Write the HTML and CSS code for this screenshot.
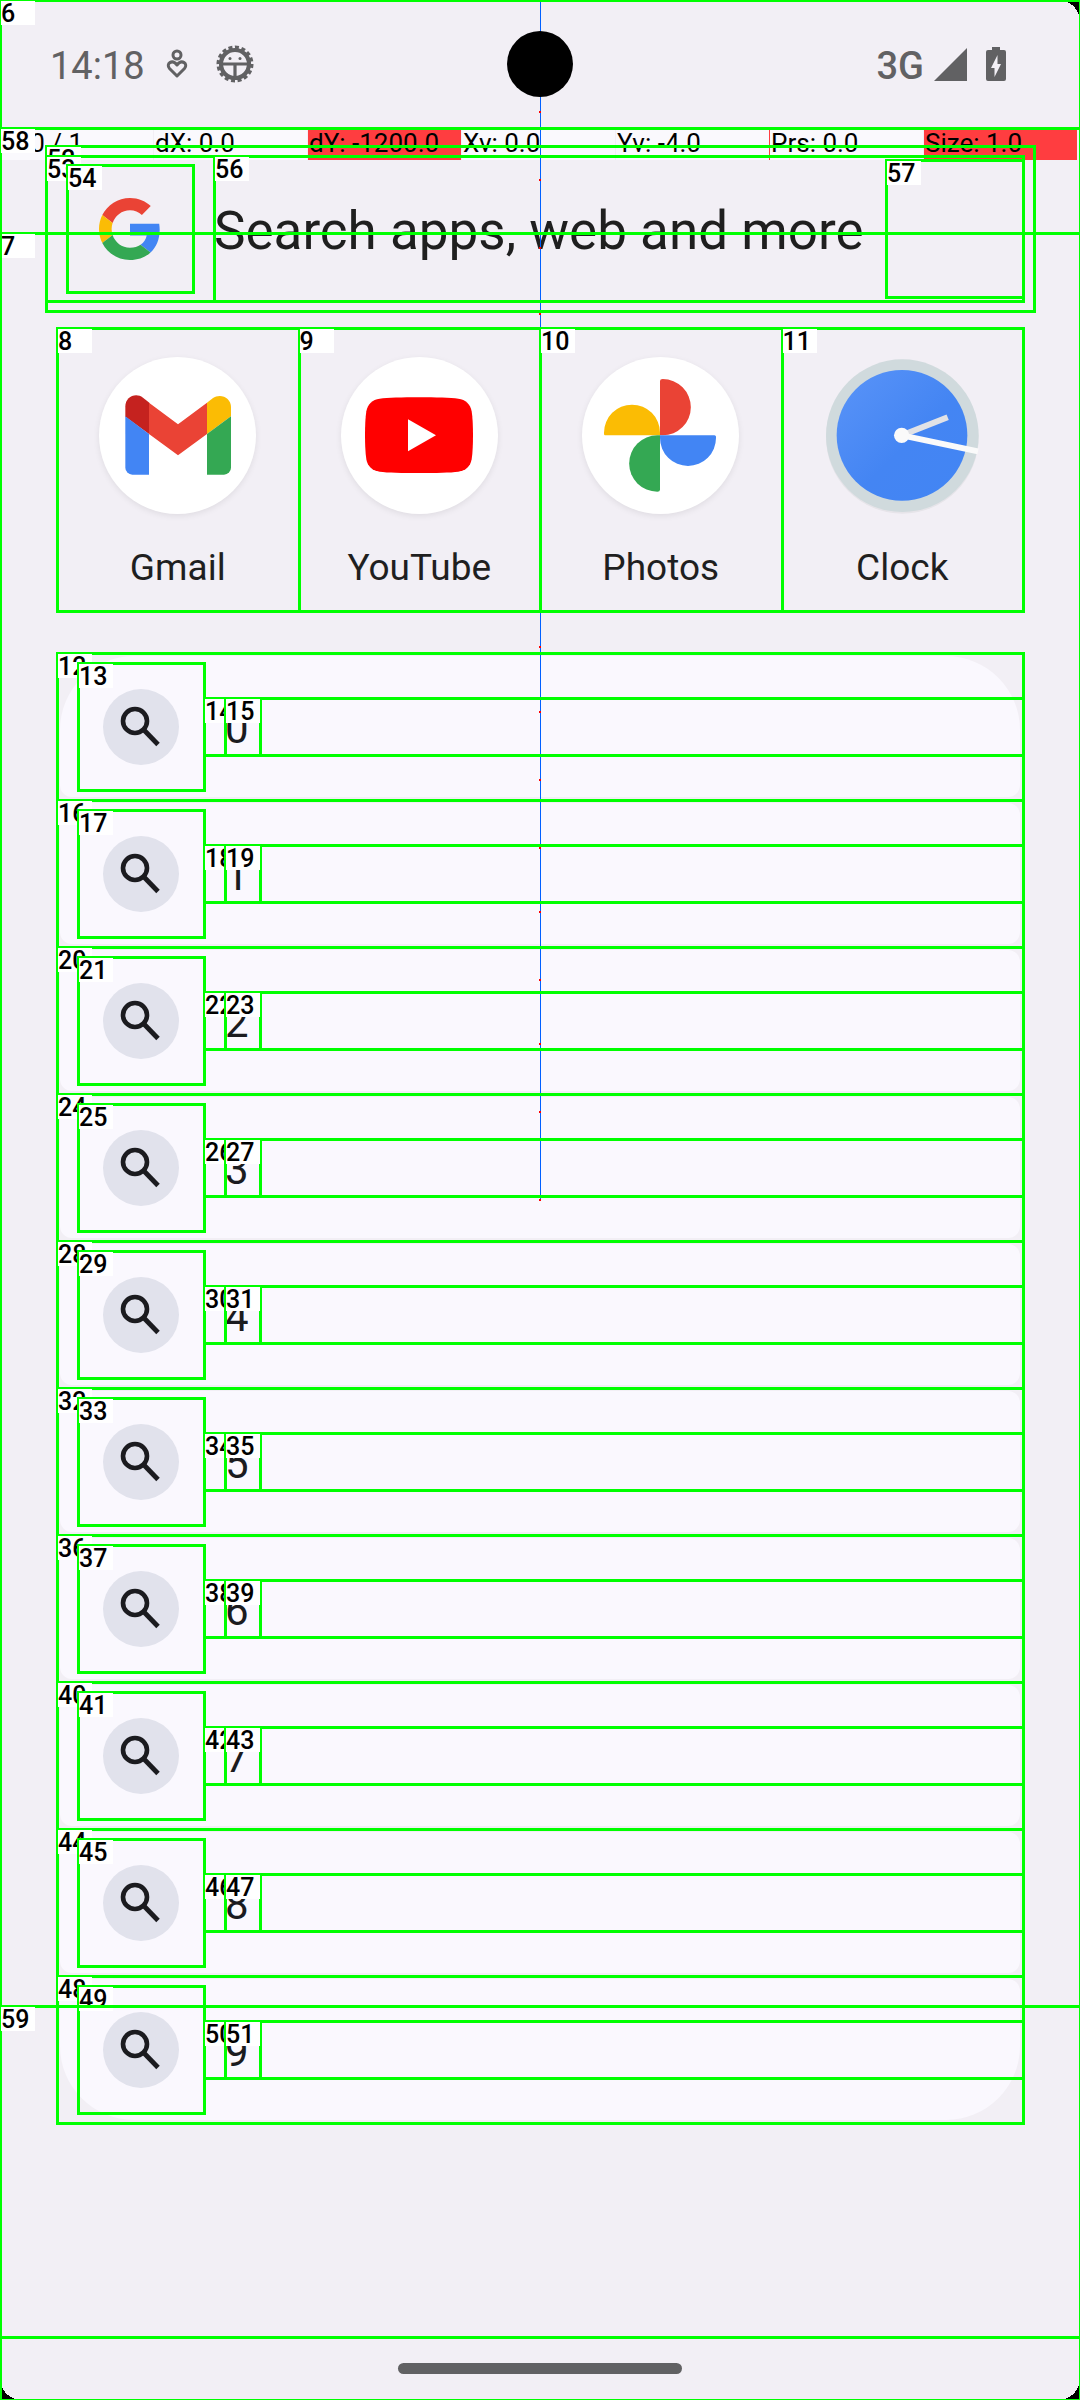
FILE: index.html
```html
<!DOCTYPE html>
<html lang="en">
<head>
<meta charset="utf-8">
<meta name="viewport" content="width=device-width, initial-scale=1">
<title>App search</title>
<link rel="stylesheet" href="styles.css">
</head>
<body>
<div class="screen">
  <span class="mark"><b>6</b></span>
  <span class="mark mark-content"><b>7</b></span>

  <header class="status">
    <span class="clock-text">14:18</span>
    <svg class="wellbeing" viewBox="0 0 22 30" fill="none" stroke="#616163" stroke-width="3"><circle cx="11" cy="6" r="4"/><path d="M11 27L3.500 19.500C-.5 15 6 9.500 11 16C16 9.500 22.500 15 18.500 19.500Z" stroke-linejoin="round"/></svg>
    <svg class="bug" viewBox="0 0 38 38" fill="none" stroke="#616163"><circle cx="19" cy="19" r="16.500" stroke-width="4" pathLength="32" stroke-dasharray="1.200 .8"/><circle cx="19" cy="19" r="14" stroke-width="4.200"/><path d="M5 19H33M19 19V33" stroke-width="3.200"/><circle cx="14" cy="13.500" r="1.500" fill="#616163" stroke="none"/><circle cx="24" cy="13.500" r="1.500" fill="#616163" stroke="none"/></svg>
    <span class="network">3G</span>
    <svg class="signal" viewBox="0 0 33 33"><path d="M33 0V33H0Z" fill="#616163"/></svg>
    <svg class="battery" viewBox="0 0 20 34"><path d="M6 0H14V3H18Q20 3 20 5V32Q20 34 18 34H2Q0 34 0 32V5Q0 3 2 3H6Z" fill="#616163"/><path d="M11.500 8V17H15L8.500 30V21H5Z" fill="#f2eff5"/></svg>
  </header>

  <div class="pointer-bar">
    <span>P: 0 / 1</span><span>dX: 0.0</span><span class="hot">dY: -1200.0</span><span>Xv: 0.0</span><span>Yv: -4.0</span><span class="edge">Prs: 0.0</span><span class="hot">Size: 1.0</span>
  </div>

  <main>
    <form class="search">
      <span class="mark"><b>52</b></span>
      <div class="search-row">
        <span class="mark"><b>53</b></span>
        <span class="logo"><svg viewBox="0 0 48 48"><path fill="#EA4335" d="M24 9.500c3.540 0 6.710 1.220 9.210 3.600l6.850-6.850C35.900 2.380 30.470 0 24 0 14.620 0 6.510 5.380 2.560 13.220l7.980 6.190C12.430 13.720 17.740 9.500 24 9.500z"/><path fill="#4285F4" d="M46.980 24.550c0-1.570-.15-3.090-.38-4.550H24v9.020h12.940c-.58 2.960-2.260 5.480-4.780 7.180l7.730 6c4.510-4.180 7.090-10.360 7.090-17.650z"/><path fill="#FBBC05" d="M10.530 28.590c-.48-1.450-.76-2.990-.76-4.590s.27-3.140.76-4.590l-7.980-6.190C.92 16.460 0 20.120 0 24c0 3.880.92 7.540 2.560 10.780l7.970-6.190z"/><path fill="#34A853" d="M24 48c6.480 0 11.930-2.130 15.890-5.810l-7.730-6c-2.150 1.450-4.920 2.300-8.160 2.300-6.260 0-11.570-4.220-13.470-9.910l-7.980 6.190C6.510 42.620 14.620 48 24 48z"/></svg><span class="mark"><b>54</b></span></span>
        <label class="field">
          <input type="text" placeholder="Search apps, web and more" aria-label="Search apps, web and more">
          <span class="mark"><b>56</b></span>
        </label>
        <button class="action" type="button" aria-label="Clear"><span class="mark"><b>57</b></span></button>
      </div>
    </form>

    <nav class="apps">
      <a class="app" href="#gmail"><svg class="white" viewBox="177 140 471 471"><path fill="#c5221f" d="M256 319V288c0-27 30-43 53-26l19 15v95z"/><path fill="#4285f4" d="M256 318l71 53v122h-50a21 21 0 0 1-21-21z"/><path fill="#ea4335" d="M327 277l87 65 87-65v94l-87 64-87-64z"/><path fill="#fbbc04" d="M501 277l17-13c23-17 55-2 55 26v28l-72 53z"/><path fill="#34a853" d="M501 371l72-53v154a21 21 0 0 1-21 21h-51z"/></svg><span>Gmail</span><span class="mark"><b>8</b></span></a>
      <a class="app" href="#youtube"><svg class="white" viewBox="900 140 471 471"><path fill="#f00" d="M1134 261c50 0 95 1 118 4 22 3 36 16 40 38 3 20 4 45 4 72s-1 52-4 72c-4 22-18 34-40 37-23 3-68 4-118 4s-95-1-118-4c-22-3-36-15-40-37-3-20-4-45-4-72s1-52 4-72c4-22 18-35 40-38 23-3 68-4 118-4z"/><path fill="#fff" d="M1101 327l84 48-84 48z"/></svg><span>YouTube</span><span class="mark"><b>9</b></span></a>
      <a class="app" href="#photos"><svg class="white" viewBox="156 140 471 471"><path fill="#ea4335" d="M390 375V212q0-6 8-6a84.500 84.500 0 0 1 0 169z"/><path fill="#fbbc04" d="M390 375H227q-6 0-5-8a84 84 0 0 1 168 0z"/><path fill="#4285f4" d="M390 375H553q6 0 5 8a84 84 0 0 1-168 0z"/><path fill="#34a853" d="M390 375V538q0 6-8 6a84.500 84.500 0 0 1 0-169z"/></svg><span>Photos</span><span class="mark"><b>10</b></span></a>
      <a class="app" href="#clock"><svg viewBox="879 140 471 471"><defs><linearGradient id="face" x1="0" y1="0" x2="1" y2="1"><stop offset="0" stop-color="#5a94f8"/><stop offset=".55" stop-color="#4485f3"/><stop offset="1" stop-color="#4285f4"/></linearGradient></defs><circle cx="1114" cy="381" r="229" fill="#e6e4e9"/><circle cx="1114" cy="376" r="229" fill="#d0dadd"/><circle cx="1113" cy="375" r="196" fill="url(#face)"/><path d="M1113 375L1250 321" stroke="#e1e2e6" stroke-width="18"/><path d="M1113 375L1341 423" stroke="#fafafa" stroke-width="18"/><circle cx="1112" cy="375" r="23" fill="#fafafa"/></svg><span>Clock</span><span class="mark"><b>11</b></span></a>
    </nav>

    <svg class="defs" width="0" height="0" aria-hidden="true"><symbol id="lens" viewBox="0 0 76 76"><circle cx="38" cy="38" r="38" fill="#e1e2ec"/><circle cx="32" cy="32" r="12" fill="none" stroke="#1b1b1f" stroke-width="4.600"/><path d="M40 40L55 55.500" stroke="#1b1b1f" stroke-width="4.800"/></symbol></svg>
    <ul class="results">
      <li><a class="row" href="#0"><span class="mark"><b>12</b></span><span class="pic"><svg><use href="#lens"/></svg><span class="mark"><b>13</b></span></span><span class="body"><span class="mark"><b>14</b></span><span class="digit">0<span class="mark"><b>15</b></span></span></span></a></li>
      <li><a class="row" href="#1"><span class="mark"><b>16</b></span><span class="pic"><svg><use href="#lens"/></svg><span class="mark"><b>17</b></span></span><span class="body"><span class="mark"><b>18</b></span><span class="digit">1<span class="mark"><b>19</b></span></span></span></a></li>
      <li><a class="row" href="#2"><span class="mark"><b>20</b></span><span class="pic"><svg><use href="#lens"/></svg><span class="mark"><b>21</b></span></span><span class="body"><span class="mark"><b>22</b></span><span class="digit">2<span class="mark"><b>23</b></span></span></span></a></li>
      <li><a class="row" href="#3"><span class="mark"><b>24</b></span><span class="pic"><svg><use href="#lens"/></svg><span class="mark"><b>25</b></span></span><span class="body"><span class="mark"><b>26</b></span><span class="digit">3<span class="mark"><b>27</b></span></span></span></a></li>
      <li><a class="row" href="#4"><span class="mark"><b>28</b></span><span class="pic"><svg><use href="#lens"/></svg><span class="mark"><b>29</b></span></span><span class="body"><span class="mark"><b>30</b></span><span class="digit">4<span class="mark"><b>31</b></span></span></span></a></li>
      <li><a class="row" href="#5"><span class="mark"><b>32</b></span><span class="pic"><svg><use href="#lens"/></svg><span class="mark"><b>33</b></span></span><span class="body"><span class="mark"><b>34</b></span><span class="digit">5<span class="mark"><b>35</b></span></span></span></a></li>
      <li><a class="row" href="#6"><span class="mark"><b>36</b></span><span class="pic"><svg><use href="#lens"/></svg><span class="mark"><b>37</b></span></span><span class="body"><span class="mark"><b>38</b></span><span class="digit">6<span class="mark"><b>39</b></span></span></span></a></li>
      <li><a class="row" href="#7"><span class="mark"><b>40</b></span><span class="pic"><svg><use href="#lens"/></svg><span class="mark"><b>41</b></span></span><span class="body"><span class="mark"><b>42</b></span><span class="digit">7<span class="mark"><b>43</b></span></span></span></a></li>
      <li><a class="row" href="#8"><span class="mark"><b>44</b></span><span class="pic"><svg><use href="#lens"/></svg><span class="mark"><b>45</b></span></span><span class="body"><span class="mark"><b>46</b></span><span class="digit">8<span class="mark"><b>47</b></span></span></span></a></li>
      <li><a class="row" href="#9"><span class="mark"><b>48</b></span><span class="pic"><svg><use href="#lens"/></svg><span class="mark"><b>49</b></span></span><span class="body"><span class="mark"><b>50</b></span><span class="digit">9<span class="mark"><b>51</b></span></span></span></a></li>
    </ul>
  </main>

  <footer class="home"><span class="pill"></span></footer>

  <svg class="trace" width="2" height="1202"><path d="M1.500 0V1199" stroke="#0060ff"/><path d="M1 111v2M1 179v2M1 247v2M1 313v2M1 379v2M1 446v2M1 513v2M1 580v2M1 646v2M1 711v2M1 779v2M1 847v2M1 911v2M1 979v2M1 1043v2M1 1111v2M1 1199v2" stroke="red" stroke-width="2"/></svg>
  <span class="camera"></span>
  <span class="corner top-right"></span>
  <span class="corner bottom-right"></span>
  <span class="corner bottom-left"></span>

  <span class="mark mark-window"><b>58</b></span>
  <span class="mark mark-keyboard"><b>59</b></span>
</div>
</body>
</html>
```
FILE: styles.css
```css
* { box-sizing: border-box; }

body {
  margin: 0;
  background: #f2eff5;
  color: #1f1f1f;
  font-family: Roboto, "Liberation Sans", sans-serif;
}

a { color: inherit; text-decoration: none; }

.screen {
  position: relative;
  display: flex;
  flex-direction: column;
  min-height: 100vh;
  overflow: hidden;
}

/* Element outlines with a numbered tag in the top left corner */
.mark {
  position: absolute;
  inset: -1px -2px -2px -1px;
  z-index: 3;
  border: 3px solid #0f0;
  pointer-events: none;
}

.mark b {
  position: absolute;
  top: -1px;
  left: -1px;
  width: 34px;
  height: 24px;
  background: #fff;
  color: #000;
  font: 500 25px/26px Roboto, sans-serif;
  text-align: left;
}

.mark-content { top: 232px; bottom: 61px; }
.mark-window { top: 127px; bottom: 61px; }
.mark-keyboard { top: auto; height: 397px; }

/* Status bar */
.status {
  display: flex;
  align-items: center;
  height: 128px;
  padding: 0 74px 0 50px;
  color: #616163;
  font-size: 38px;
  line-height: 44px;
}

.clock-text, .network { padding-top: 4px; }
.wellbeing { width: 22px; height: 30px; margin-left: 21px; }
.bug { width: 38px; height: 38px; margin-left: 28px; }
.network { margin-left: auto; font-weight: 500; }
.signal { width: 33px; height: 33px; margin-left: 10px; }
.battery { width: 20px; height: 34px; margin-left: 19px; }

.pointer-bar {
  position: absolute;
  z-index: 1;
  top: 128px;
  left: 0;
  right: 3px;
  display: grid;
  grid-template-columns: repeat(7, 1fr);
  gap: 1px;
  color: #000;
  font-size: 26px;
  line-height: 30px;
}

.pointer-bar span { height: 32px; padding-left: 1px; background: #faf9fd; }
.pointer-bar .hot { background: #ff3d40; }
.pointer-bar .edge { box-shadow: -1px 0 #ff3d40; }

/* Search box */
.search {
  position: relative;
  margin: 18px 46px 0;
  padding: 10px 11px 10px 0;
}

.search-row {
  position: relative;
  display: flex;
  align-items: center;
  height: 145px;
  padding-left: 21px;
}

.logo {
  position: relative;
  display: grid;
  place-items: center;
  width: 126px;
  height: 127px;
  margin-right: 21px;
}

.logo svg { width: 62px; height: 62px; }

.field { flex: 1; height: 145px; min-width: 0; }
.field .mark { left: 167px; }

.field input {
  width: 100%;
  height: 100%;
  padding: 4px 0 0;
  border: 0;
  outline: 0;
  background: none;
  color: #1f1f1f;
  font: 53px Roboto, sans-serif;
}

.field input::placeholder { color: #1f1f1f; opacity: 1; }

.action {
  position: relative;
  width: 137px;
  height: 137px;
  padding: 0;
  border: 0;
  background: none;
}

/* App shortcuts */
.apps {
  display: grid;
  grid-template-columns: repeat(4, 1fr);
  margin: 17px 57px 0;
}

.app {
  position: relative;
  display: flex;
  flex-direction: column;
  align-items: center;
  gap: 32px;
  padding: 29px 0 21px;
  font-size: 37px;
  line-height: 44px;
}

.app svg { width: 157px; height: 157px; border-radius: 50%; }
.app .white { background: #fff; box-shadow: 0 2px 6px #00000014; }

/* Results */
.defs { position: absolute; }

.results {
  margin: 42px 57px 30px;
  padding: 0;
  list-style: none;
}

.row {
  position: relative;
  display: flex;
  align-items: center;
  height: 147px;
  padding-left: 21px;
}

.row::before {
  content: "";
  position: absolute;
  inset: 3px;
  border-radius: 12px;
  background: #faf8fe;
}

.results li:first-child .row::before { border-radius: 74px 74px 12px 12px; }
.results li:last-child .row::before { border-radius: 12px 12px 74px 74px; }

.pic {
  position: relative;
  display: grid;
  place-items: center;
  width: 126px;
  height: 127px;
}

.pic svg { width: 76px; height: 76px; }

.body {
  position: relative;
  display: flex;
  flex: 1;
  height: 57px;
  padding-left: 21px;
}

.digit {
  position: relative;
  width: 35px;
  height: 57px;
  color: #1b1b1f;
  font-size: 42px;
  line-height: 62px;
}

/* Gesture bar */
.home {
  display: grid;
  place-items: center;
  height: 63px;
  margin-top: auto;
}

.pill { width: 284px; height: 11px; border-radius: 6px; background: #616163; }

/* Touch trace and display cutouts */
.trace { position: absolute; z-index: 1; top: 0; left: 50%; margin-left: -1px; }

.camera {
  position: absolute;
  z-index: 2;
  top: 31px;
  left: 50%;
  width: 66px;
  height: 66px;
  margin-left: -33px;
  border-radius: 50%;
  background: #000;
}

.corner { position: absolute; z-index: 2; width: 22px; height: 22px; }
.top-right { top: 0; right: 0; background: radial-gradient(circle at 0 100%, transparent 22px, #000 22px); }
.bottom-right { bottom: 0; right: 0; background: radial-gradient(circle at 0 0, transparent 22px, #000 22px); }
.bottom-left { bottom: 0; left: 0; background: radial-gradient(circle at 100% 0, transparent 22px, #000 22px); }
```
